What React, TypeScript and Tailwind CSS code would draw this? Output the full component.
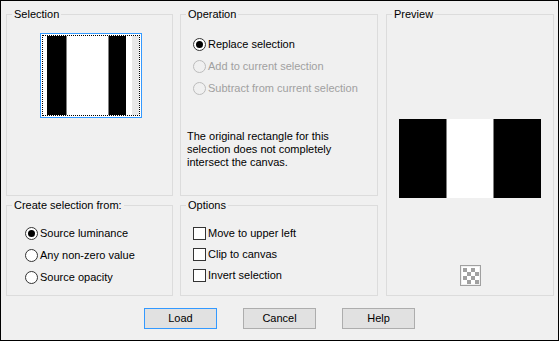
import type { ReactNode } from 'react';

function Group({ title, className, children }: { title: string; className: string; children?: ReactNode }) {
  return (
    <fieldset className={`border border-[#dcdcdc] ${className}`}>
      <legend className="ml-[5px] px-[2px] leading-[13px]">{title}</legend>
      {children}
    </fieldset>
  );
}

function Radio({ label, checked, disabled }: { label: string; checked?: boolean; disabled?: boolean }) {
  return (
    <div className="flex items-center gap-[2px] h-[22px]">
      <div
        className={
          disabled
            ? 'w-[13px] h-[13px] rounded-full border border-[#bcbcbc] bg-[#f0f0f0]'
            : 'w-[13px] h-[13px] rounded-full border border-[#333333] bg-white flex items-center justify-center'
        }
      >
        {checked && <div className="w-[7px] h-[7px] rounded-full bg-black" />}
      </div>
      <span className={disabled ? 'text-[#a0a0a0]' : ''}>{label}</span>
    </div>
  );
}

function Check({ label }: { label: string }) {
  return (
    <div className="flex items-center gap-[2px] h-[21px]">
      <div className="w-[13px] h-[13px] border border-[#333333] bg-white" />
      <span>{label}</span>
    </div>
  );
}

function Button({ label, focused }: { label: string; focused?: boolean }) {
  return (
    <button
      className={`w-[73px] h-[21px] bg-[#e1e1e1] border ${focused ? 'border-[#3399ff]' : 'border-[#adadad]'} leading-[19px]`}
    >
      {label}
    </button>
  );
}

export default function App() {
  return (
    <div className="w-[559px] h-[341px] border border-black bg-[#f0f0f0] text-[11px] text-black font-['Liberation_Sans',sans-serif] flex flex-col">
      <div className="flex pl-[5px] pt-[7px]">
        {/* left column */}
        <div className="flex flex-col gap-[3px] w-[167px]">
          <Group title="Selection" className="h-[188px]">
            <div className="ml-[33px] mt-[12px] w-[102px] h-[85px] border border-[#3399ff] bg-white p-[1px]">
              <div className="w-full h-full border border-dotted border-black flex">
                <div className="w-[4px] bg-white" />
                <div className="w-[19px] bg-black" />
                <div className="w-[1px] bg-[#808080]" />
                <div className="w-[41px] bg-white" />
                <div className="w-[1px] bg-[#808080]" />
                <div className="w-[17px] bg-black" />
                <div className="w-[6px] bg-white" />
                <div className="flex-1 bg-[#e8e8e8]" />
              </div>
            </div>
          </Group>
          <Group title="Create selection from:" className="h-[97px]">
            <div className="pl-[18px] mt-[10px]">
              <Radio label="Source luminance" checked />
              <Radio label="Any non-zero value" />
              <Radio label="Source opacity" />
            </div>
          </Group>
        </div>

        {/* middle column */}
        <div className="flex flex-col gap-[3px] w-[198px] ml-[7px]">
          <Group title="Operation" className="h-[188px]">
            <div className="pl-[12px] mt-[12px]">
              <Radio label="Replace selection" checked />
              <Radio label="Add to current selection" disabled />
              <Radio label="Subtract from current selection" disabled />
            </div>
            <p className="pl-[6px] mt-[31px] leading-[13px] w-[170px]">
              The original rectangle for this selection does not completely intersect the canvas.
            </p>
          </Group>
          <Group title="Options" className="h-[97px]">
            <div className="pl-[12px] mt-[11px]">
              <Check label="Move to upper left" />
              <Check label="Clip to canvas" />
              <Check label="Invert selection" />
            </div>
          </Group>
        </div>

        {/* right column */}
        <Group title="Preview" className="w-[168px] h-[288px] ml-[8px]">
          <div className="flex flex-col items-center">
            <div className="mt-[98px] w-[142px] h-[79px] flex">
              <div className="w-[47px] bg-black" />
              <div className="w-[1px] bg-[#808080]" />
              <div className="w-[46px] bg-white" />
              <div className="w-[1px] bg-[#808080]" />
              <div className="flex-1 bg-black" />
            </div>
            <svg className="mt-[67px]" width="21" height="21" viewBox="0 0 21 21">
              <rect x="0.5" y="0.5" width="20" height="20" fill="#f0f0f0" stroke="#a0a0a0" />
              <rect x="2" y="2" width="17" height="17" fill="#ffffff" />
              {[0, 1, 2, 3].map((r) =>
                [0, 1, 2, 3].map((c) =>
                  (r + c) % 2 === 0 ? (
                    <rect key={`${r}-${c}`} x={3 + c * 4} y={3 + r * 4} width="4" height="4" fill="#a0a0a0" />
                  ) : null
                )
              )}
            </svg>
          </div>
        </Group>
      </div>

      <div className="flex justify-center gap-[26px] mt-[12px]">
        <Button label="Load" focused />
        <Button label="Cancel" />
        <Button label="Help" />
      </div>
    </div>
  );
}
